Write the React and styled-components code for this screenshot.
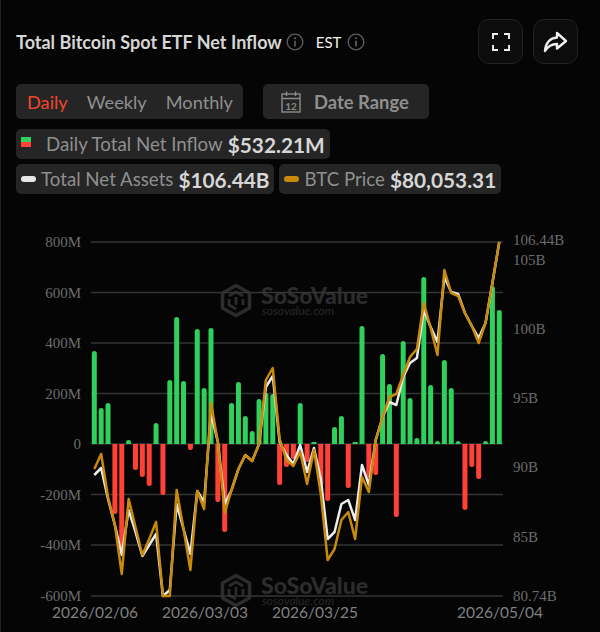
import React from 'react'
import styled, { createGlobalStyle } from 'styled-components'

const GlobalStyle = createGlobalStyle`
   html, body {
      margin: 0;
      padding: 0;
      background: #050505;
   }
`

// heights in px from the zero line, minus = outflow
const flows = [
   93, 36, 41, -70, -104, 4, -26, -33, -42, 21, -51, 64, 127, 63, -6, 115, 56,
   116, -58, -88, 41, 62, 28, 13, 45, 51, 50, -41, -23, -15, 41, -18, 2, -42,
   -57, 17, 28, -44, 2, 118, -34, -31, 90, 60, -73, 103, 46, 6, 167, 59, 3, 84,
   56, 3, -66, -23, -35, 3, 158, 134,
]

const btcLine = [
   469, 454, 497, 525, 574, 499, 527, 555, 539, 522, 596, 596, 490, 529, 570,
   491, 509, 403, 442, 513, 490, 469, 455, 461, 444, 380, 368, 439, 460, 466,
   452, 484, 450, 494, 560, 549, 520, 512, 539, 477, 492, 440, 417, 397, 394,
   375, 357, 349, 303, 328, 355, 270, 293, 296, 313, 326, 343, 323, 283, 242,
]

const assetsLine = [
   475, 468, 499, 525, 555, 510, 532, 556, 545, 534, 596, 590, 504, 529, 554,
   491, 502, 413, 442, 504, 490, 469, 455, 461, 444, 387, 376, 442, 455, 464,
   445, 472, 448, 479, 539, 532, 504, 500, 520, 465, 485, 440, 417, 402, 405,
   377, 363, 358, 310, 327, 342, 277, 292, 294, 313, 326, 338, 323, 283, 242,
]

const grid = [
   { y: 242, label: '800M' },
   { y: 292.5, label: '600M' },
   { y: 343, label: '400M' },
   { y: 393.5, label: '200M' },
   { y: 444, label: '0' },
   { y: 494.5, label: '-200M' },
   { y: 545, label: '-400M' },
   { y: 596, label: '-600M' },
]

const rightAxis = [
   { y: 245, label: '106.44B' },
   { y: 265, label: '105B' },
   { y: 334, label: '100B' },
   { y: 403, label: '95B' },
   { y: 472, label: '90B' },
   { y: 542, label: '85B' },
   { y: 601, label: '80.74B' },
]

const dates = [
   { x: 52, label: '2026/02/06' },
   { x: 162, label: '2026/03/03' },
   { x: 272, label: '2026/03/25' },
   { x: 457, label: '2026/05/04' },
]

const barX = (i) => 94.3 + i * 6.864

const toPoints = (line) => line.map((y, i) => `${barX(i)},${y}`).join(' ')

const barPath = (x, h) => {
   const r = 2.5
   const dir = h > 0 ? -1 : 1
   const end = 444 + h * -1
   if (Math.abs(h) < r) {
      return `M${x - r} 444 V${end} H${x + r} V444 Z`
   }
   const sweep = h > 0 ? 1 : 0
   return `M${x - r} 444 V${end - dir * r} A${r} ${r} 0 0 ${sweep} ${x + r} ${end - dir * r} V444 Z`
}

const InfoIcon = () => (
   <InfoSvg viewBox="0 0 18 18">
      <circle cx="9" cy="9" r="7.8" fill="none" stroke="#5e5e5e" strokeWidth="1.3" />
      <circle cx="9" cy="5.2" r="1" fill="#6a6a6a" />
      <path d="M9 7.8V13.4" stroke="#6a6a6a" strokeWidth="1.5" />
   </InfoSvg>
)

const Watermark = ({ y }) => (
   <g>
      <g fill="none" stroke="#2c2c2c" strokeWidth="3.6" strokeLinejoin="round">
         <path d={`M236 ${y - 14.5} L249.5 ${y - 7} V${y + 8} L236 ${y + 15.5} L222.5 ${y + 8} V${y - 7} Z`} />
         <path d={`M229 ${y - 4} L236 ${y - 8} L243 ${y - 4} M236 ${y - 3} V${y + 5} M229 ${y - 1} V${y + 5} L236 ${y + 9} M243 ${y - 1} V${y + 5}`} strokeWidth="2.8" />
      </g>
      <WatermarkName x="261" y={y + 4}>SoSoValue</WatermarkName>
      <WatermarkSite x="262" y={y + 15}>sosovalue.com</WatermarkSite>
   </g>
)

const App = () => {
   return (
      <Page>
         <GlobalStyle />
         <Header>
            <TitleGroup>
               <Title>Total Bitcoin Spot ETF Net Inflow</Title>
               <InfoIcon />
               <Zone>EST</Zone>
               <InfoIcon />
            </TitleGroup>
            <Actions>
               <IconButton>
                  <svg width="18" height="18" viewBox="0 0 18 18" fill="none" stroke="#f0f0f0" strokeWidth="1.9">
                     <path d="M1 6V1H6M12 1H17V6M1 12V17H6M12 17H17V12" />
                  </svg>
               </IconButton>
               <IconButton>
                  <svg width="25" height="22" viewBox="0 0 25 22" fill="none" stroke="#f0f0f0" strokeWidth="2.4" strokeLinejoin="round">
                     <path d="M14 2L23 10L14 17.5V13C9 13 5 15 2 20C2.5 12 7 7 14 6.5Z" />
                  </svg>
               </IconButton>
            </Actions>
         </Header>

         <Controls>
            <Tabs>
               <Tab $active>Daily</Tab>
               <Tab>Weekly</Tab>
               <Tab>Monthly</Tab>
            </Tabs>
            <DateRange>
               <svg width="20" height="22" viewBox="0 0 20 22" fill="none" stroke="#8a8a8a" strokeWidth="1.4">
                  <rect x="1" y="3" width="18" height="18" />
                  <path d="M1 7.5H19M5.5 0.5V5M14.5 0.5V5" />
                  <CalendarDay x="10" y="18.5">12</CalendarDay>
               </svg>
               Date Range
            </DateRange>
         </Controls>

         <Legends>
            <LegendRow>
               <LegendItem>
                  <SplitMark />
                  <LegendLabel $wide>Daily Total Net Inflow</LegendLabel>
                  <LegendValue>$532.21M</LegendValue>
               </LegendItem>
            </LegendRow>
            <LegendRow>
               <LegendItem>
                  <LineMark $color="#e6e6e6" />
                  <LegendLabel>Total Net Assets</LegendLabel>
                  <LegendValue>$106.44B</LegendValue>
               </LegendItem>
               <LegendItem>
                  <LineMark $color="#c98a0c" />
                  <LegendLabel>BTC Price</LegendLabel>
                  <LegendValue>$80,053.31</LegendValue>
               </LegendItem>
            </LegendRow>
         </Legends>

         <ChartSvg viewBox="0 200 600 432">
            <Watermark y={300} />
            <Watermark y={590} />
            {grid.map((g) => (
               <g key={g.label}>
                  <line x1="91" x2="503" y1={g.y} y2={g.y} stroke="#353535" strokeWidth="1.4" />
                  <AxisText x="81" y={g.y + 5} textAnchor="end">{g.label}</AxisText>
               </g>
            ))}
            {rightAxis.map((a) => (
               <AxisText key={a.label} x="513" y={a.y}>{a.label}</AxisText>
            ))}
            {flows.map((h, i) => (
               <path key={i} d={barPath(barX(i), h)} fill={h > 0 ? '#2fd05b' : '#ff4235'} />
            ))}
            <polyline points={toPoints(assetsLine)} fill="none" stroke="#ececec" strokeWidth="2.5" strokeLinejoin="round" />
            <polyline points={toPoints(btcLine)} fill="none" stroke="#c98a0c" strokeWidth="2.5" strokeLinejoin="round" />
            {dates.map((d) => (
               <DateText key={d.label} x={d.x} y="618">{d.label}</DateText>
            ))}
         </ChartSvg>
      </Page>
   )
}

export default App

const Page = styled.div`
   box-sizing: border-box;
   width: 600px;
   height: 632px;
   overflow: hidden;
   padding: 19px 22px 0 16px;
   background: #050505;
   border-left: 1px solid #202020;
   font-family: 'Lato', sans-serif;
   position: relative;
`
const Header = styled.div`
   display: flex;
   align-items: center;
   justify-content: space-between;
`
const TitleGroup = styled.div`
   display: flex;
   align-items: center;
   margin-left: -1px;
`
const Title = styled.h1`
   margin: 0 4px 0 0;
   font-size: 18px;
   font-weight: 700;
   color: #d6d6d6;
`
const InfoSvg = styled.svg`
   width: 18px;
   height: 18px;
   flex-shrink: 0;
`
const Zone = styled.span`
   margin: 0 6px 0 12px;
   font-size: 15px;
   color: #f2f2f2;
`
const Actions = styled.div`
   display: flex;
   gap: 10px;
`
const IconButton = styled.div`
   box-sizing: border-box;
   width: 45px;
   height: 45px;
   display: flex;
   align-items: center;
   justify-content: center;
   background: #0c0c0c;
   border: 1px solid #222222;
   border-radius: 11px;
`
const Controls = styled.div`
   display: flex;
   gap: 20px;
   margin: 20px 0 0 -1px;
`
const Tabs = styled.div`
   box-sizing: border-box;
   width: 227px;
   height: 35px;
   display: flex;
   align-items: center;
   justify-content: space-between;
   padding: 0 10px 0 11px;
   background: #252525;
   border-radius: 5px;
`
const Tab = styled.span`
   font-size: 18.2px;
   color: ${(props) => (props.$active ? '#f5452b' : '#8f8f8f')};
`
const DateRange = styled.div`
   box-sizing: border-box;
   width: 166px;
   height: 35px;
   display: flex;
   align-items: center;
   gap: 13px;
   padding-left: 18px;
   background: #252525;
   border-radius: 5px;
   font-size: 18.4px;
   font-weight: 700;
   color: #8f8f8f;
`
const CalendarDay = styled.text`
   font-family: 'Lato', sans-serif;
   font-size: 10px;
   fill: #8a8a8a;
   stroke: none;
   text-anchor: middle;
`
const Legends = styled.div`
   display: flex;
   flex-direction: column;
   gap: 5px;
   margin: 10px 0 0 -1px;
`
const LegendRow = styled.div`
   display: flex;
   gap: 5px;
`
const LegendItem = styled.div`
   box-sizing: border-box;
   height: 30px;
   display: flex;
   align-items: center;
   padding: 0 5px;
   background: #252525;
   border-radius: 5px;
`
const SplitMark = styled.span`
   width: 10px;
   height: 10px;
   margin-bottom: 4px;
   background: linear-gradient(#2fd05b 50%, #ff4235 50%);
`
const LineMark = styled.span`
   width: 15px;
   height: 6px;
   border-radius: 3px;
   background: ${(props) => props.$color};
`
const LegendLabel = styled.span`
   margin-left: ${(props) => (props.$wide ? '15px' : '5px')};
   font-size: 18.7px;
   color: #8f8f8f;
`
const LegendValue = styled.span`
   margin-left: 5px;
   font-size: 20.8px;
   font-weight: 700;
   color: #d6d6d6;
`
const ChartSvg = styled.svg`
   position: absolute;
   left: -1px;
   bottom: 0;
   width: 600px;
   height: 432px;
`
const AxisText = styled.text`
   font-family: 'Liberation Serif', serif;
   font-size: 15px;
   fill: #6c6c6c;
`
const DateText = styled.text`
   font-family: 'Lato', sans-serif;
   font-size: 15.5px;
   fill: #808080;
`
const WatermarkName = styled.text`
   font-family: 'Lato', sans-serif;
   font-size: 23px;
   font-weight: 900;
   fill: #2c2c2c;
`
const WatermarkSite = styled.text`
   font-family: 'Lato', sans-serif;
   font-size: 12px;
   font-style: italic;
   fill: #282828;
`
